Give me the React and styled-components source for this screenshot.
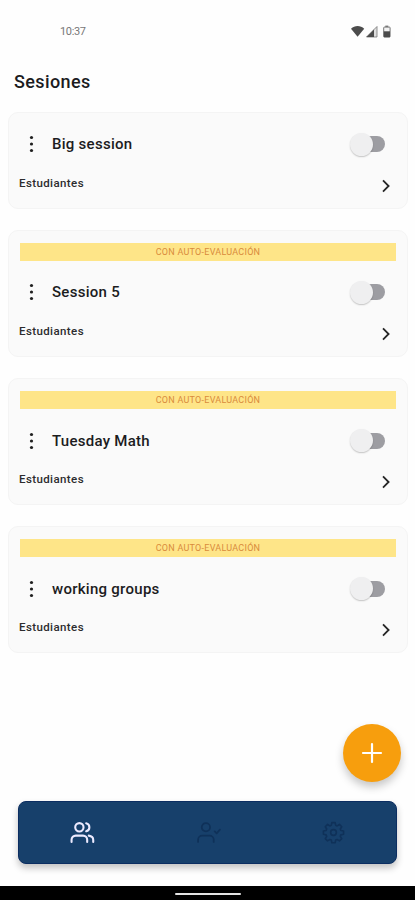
import React from "react";
import styled, { createGlobalStyle } from "styled-components";

const Global = createGlobalStyle`
  * { box-sizing: border-box; }
  body { margin: 0; background: #fff; font-family: Roboto, sans-serif; color: #1c1c1e; }
`;

const Screen = styled.div`
  width: 415px;
  height: 900px;
  display: flex;
  flex-direction: column;
  background: #fefefe;
  overflow: hidden;
`;

const StatusBar = styled.header`
  height: 62px;
  flex: none;
  display: flex;
  align-items: center;
  justify-content: space-between;
  padding: 0 23px 0 60px;
`;

const Clock = styled.time`
  font-size: 11px;
  letter-spacing: -0.35px;
  color: #777;
`;

const StatusIcons = styled.svg`
  width: 41px;
  height: 13px;
  display: block;
`;

const Title = styled.h1`
  margin: 0;
  height: 49.7px;
  flex: none;
  padding: 8px 0 0 14px;
  font-size: 18px;
  line-height: 24px;
  font-weight: 500;
  letter-spacing: 0.4px;
`;

const SessionList = styled.main`
  flex: none;
  display: flex;
  flex-direction: column;
  gap: 21.2px;
  padding: 0 7px 0 8px;
`;

const Card = styled.section`
  height: ${(p) => (p.$tall ? 127 : 97)}px;
  padding: 12px 11px 0;
  border: 1px solid #f4f4f4;
  border-radius: 10px;
  background: #fafafa;
`;

const Banner = styled.div`
  height: 18px;
  margin-bottom: 12px;
  display: flex;
  align-items: center;
  justify-content: center;
  background: #fee588;
  color: #d98b3c;
  font-size: 9px;
  letter-spacing: 0.25px;
`;

const SessionHeader = styled.div`
  height: 39px;
  display: flex;
  align-items: center;
  padding: 0 11px 0 9px;
`;

const Dots = styled.svg`
  width: 5px;
  height: 18px;
  margin-right: 18px;
`;

const SessionName = styled.h2`
  margin: 0;
  flex: 1;
  font-size: 15px;
  font-weight: 500;
  letter-spacing: 0.27px;
`;

const Toggle = styled.button`
  width: 35px;
  height: 24px;
  padding: 0;
  border: 0;
  background: none;
  display: flex;
  align-items: center;
`;

const Knob = styled.span`
  width: 23px;
  height: 23px;
  flex: none;
  border-radius: 50%;
  background: #efeff0;
  box-shadow: 0 1px 1.5px rgba(0, 0, 0, 0.22);
  z-index: 1;
`;

const Track = styled.span`
  width: 24px;
  height: 16px;
  flex: none;
  margin-left: -12px;
  border-radius: 8px;
  background: #9d9da2;
`;

const StudentsRow = styled.div`
  height: 32px;
  display: flex;
  justify-content: space-between;
  padding: 12px 5px 0 0;
`;

const StudentsLabel = styled.span`
  font-size: 11.5px;
  line-height: 14px;
  font-weight: 500;
  letter-spacing: 0.4px;
  margin-left: -1px;
  color: #2c2c2e;
`;

const Chevron = styled.svg`
  width: 10px;
  height: 15px;
  margin-top: 3px;
`;

const ActionRow = styled.div`
  height: 147.7px;
  flex: none;
  display: flex;
  justify-content: flex-end;
  align-items: flex-end;
  padding: 0 14px 19px 0;
`;

const AddButton = styled.button`
  width: 58px;
  height: 58px;
  padding: 0;
  border: 0;
  border-radius: 50%;
  display: grid;
  place-items: center;
  background: #f79e0d;
  box-shadow: 0 5px 8px rgba(0, 0, 0, 0.22);
`;

const TabBar = styled.nav`
  flex: none;
  height: 63px;
  margin: 0 18px;
  display: grid;
  grid-template-columns: 126px 126px 1fr;
  place-items: center;
  border: 1px solid #0b2d61;
  border-radius: 8px;
  background: #17406b;
  box-shadow: 0 4px 7px rgba(0, 0, 0, 0.24);
`;

const TabIcon = styled.svg`
  width: ${(p) => p.$size || 25}px;
  height: ${(p) => p.$size || 25}px;
  fill: none;
  stroke: ${(p) => (p.$active ? "#eceaff" : "#0f3159")};
  stroke-width: ${(p) => (p.$active ? 2 : 1.7)};
  stroke-linecap: round;
  stroke-linejoin: round;
`;

const SystemBar = styled.footer`
  height: 14px;
  flex: none;
  margin-top: auto;
  display: flex;
  justify-content: center;
  padding-top: 7px;
  background: #000;
`;

const HomeHandle = styled.span`
  width: 66px;
  height: 2px;
  border-radius: 1px;
  background: #e4e4e4;
`;

const sessions = [
  { name: "Big session", selfEval: false },
  { name: "Session 5", selfEval: true },
  { name: "Tuesday Math", selfEval: true },
  { name: "working groups", selfEval: true },
];

function SessionCard({ name, selfEval }) {
  return (
    <Card $tall={selfEval}>
      {selfEval && <Banner>CON AUTO-EVALUACIÓN</Banner>}
      <SessionHeader>
        <Dots viewBox="0 0 5 18" fill="#202020">
          <circle cx="2.5" cy="2.5" r="1.6" />
          <circle cx="2.5" cy="9" r="1.6" />
          <circle cx="2.5" cy="15.5" r="1.6" />
        </Dots>
        <SessionName>{name}</SessionName>
        <Toggle role="switch" aria-checked="false" aria-label={name}>
          <Knob />
          <Track />
        </Toggle>
      </SessionHeader>
      <StudentsRow>
        <StudentsLabel>Estudiantes</StudentsLabel>
        <Chevron viewBox="0 0 10 15" fill="none" stroke="#252525" strokeWidth="1.8">
          <path d="M2 1.4l5.6 5.6L2 12.6" />
        </Chevron>
      </StudentsRow>
    </Card>
  );
}

export default function App() {
  return (
    <Screen>
      <Global />
      <StatusBar>
        <Clock>10:37</Clock>
        <StatusIcons viewBox="0 0 41 13">
          <path d="M0 3.8C3.7.2 9.5.2 13.2 3.8L6.6 11.8z" fill="#4c4c4c" />
          <path d="M15.5 12L26 1.5V12z" fill="#dedede" stroke="#777" strokeWidth=".8" />
          <path d="M15.5 12L23 4.6V12z" fill="#4c4c4c" />
          <rect x="34.3" y="0.6" width="3" height="2" fill="#777" />
          <rect x="32.7" y="2.1" width="6.4" height="10" rx=".6" fill="#f2f2f2" stroke="#777" />
          <rect x="32.8" y="6.3" width="6.2" height="5.8" fill="#4c4c4c" />
        </StatusIcons>
      </StatusBar>
      <Title>Sesiones</Title>
      <SessionList>
        {sessions.map((s) => (
          <SessionCard key={s.name} {...s} />
        ))}
      </SessionList>
      <ActionRow>
        <AddButton aria-label="Agregar">
          <svg width="22" height="22" stroke="#fff" strokeWidth="2.2" strokeLinecap="round">
            <path d="M11 2v18M2 11h18" />
          </svg>
        </AddButton>
      </ActionRow>
      <TabBar>
        <TabIcon viewBox="0 0 24 24" $active>
          <circle cx="9" cy="7" r="4" />
          <path d="M1.5 21v-2a4 4 0 0 1 4-4h7a4 4 0 0 1 4 4v2M15.5 3.1a4 4 0 0 1 0 7.8M18 15c2.8.4 4.3 2 4.3 4.2V21" />
        </TabIcon>
        <TabIcon viewBox="0 0 24 24">
          <circle cx="9.5" cy="7" r="4" />
          <path d="M2 21v-2a4 4 0 0 1 4-4h7a4 4 0 0 1 4 4v2M18 11l1.8 1.8L23 9.2" />
        </TabIcon>
        <TabIcon viewBox="0 0 24 24" $size={23}>
          <circle cx="12" cy="12" r="3" />
          <path d="M10.3 2.2h3.4l.6 2.8 1.5.6 2.4-1.5 2.4 2.4-1.5 2.4.6 1.5 2.8.6v3.4l-2.8.6-.6 1.5 1.5 2.4-2.4 2.4-2.4-1.5-1.5.6-.6 2.8h-3.4l-.6-2.8-1.5-.6-2.4 1.5-2.4-2.4 1.5-2.4-.6-1.5-2.8-.6v-3.4l2.8-.6.6-1.5-1.5-2.4 2.4-2.4 2.4 1.5 1.5-.6z" transform="translate(0 -.5)" />
        </TabIcon>
      </TabBar>
      <SystemBar>
        <HomeHandle />
      </SystemBar>
    </Screen>
  );
}
